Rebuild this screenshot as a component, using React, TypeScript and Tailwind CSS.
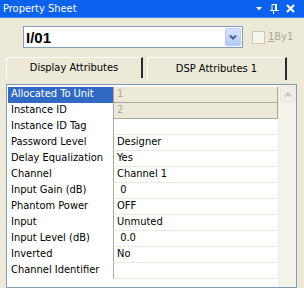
import React from "react";

const rows: { name: string; value: string; disabled?: boolean }[] = [
  { name: "Allocated To Unit", value: "1", disabled: true },
  { name: "Instance ID", value: "2", disabled: true },
  { name: "Instance ID Tag", value: "" },
  { name: "Password Level", value: "Designer" },
  { name: "Delay Equalization", value: "Yes" },
  { name: "Channel", value: "Channel 1" },
  { name: "Input Gain (dB)", value: "\u00a00" },
  { name: "Phantom Power", value: "OFF" },
  { name: "Input", value: "Unmuted" },
  { name: "Input Level (dB)", value: "\u00a00.0" },
  { name: "Inverted", value: "No" },
  { name: "Channel Identifier", value: "" },
];

const App: React.FC = () => {
  return (
    <div className="w-[304px] h-[288px] overflow-hidden bg-[#ECE9D8] flex flex-col font-['DejaVu_Sans_Condensed','Liberation_Sans',sans-serif] text-[11px] text-black">
      {/* Title bar */}
      <div className="h-[18px] bg-[#0a62ee] border-b border-[#3d86f5] flex items-center justify-between pl-[3px] pr-[9px] shrink-0">
        <span className="text-white text-[11px] leading-none">Property Sheet</span>
        <div className="flex items-center gap-[7px]">
          <svg width="6" height="4" viewBox="0 0 6 4">
            <path d="M0 0 H6 L3 3.5 Z" fill="white" />
          </svg>
          <svg width="10" height="10" viewBox="0 0 10 10">
            <path d="M3 0.5 H6.5 V6 M3 0.5 V6" stroke="white" strokeWidth="1" fill="none" />
            <rect x="6" y="0" width="2" height="6.5" fill="white" />
            <rect x="1" y="6" width="9" height="1" fill="white" />
            <rect x="4" y="7" width="1" height="3" fill="white" />
          </svg>
          <svg width="9" height="9" viewBox="0 0 9 9">
            <path d="M1 1 L8 8 M8 1 L1 8" stroke="white" strokeWidth="2" />
          </svg>
        </div>
      </div>

      {/* Combo + checkbox */}
      <div className="flex items-center pl-[23px] mt-[8px] shrink-0">
        <div className="w-[220px] h-[22px] border border-[#7F9DB9] bg-white flex items-center justify-between pl-[1px] pr-[1px]">
          <span className="font-['Liberation_Sans',Arial,sans-serif] font-bold text-[15px] leading-none pl-[1px]">I/01</span>
          <div className="w-[16px] h-[18px] rounded-[2px] bg-gradient-to-b from-[#d6e3fd] to-[#b3c9f7] border border-[#b8cdf8] flex items-center justify-center">
            <svg width="8" height="5" viewBox="0 0 8 5">
              <path d="M1 0.5 L4 3.5 L7 0.5" stroke="#4d6185" strokeWidth="2" fill="none" />
            </svg>
          </div>
        </div>
        <div className="ml-[9px] w-[13px] h-[13px] border border-[#cac8bb] bg-[#f6f5ef]" />
        <span className="ml-[3px] text-[#aca899]">
          <span className="underline">1</span>By1
        </span>
      </div>

      {/* Tabs */}
      <div className="flex items-end pl-[6px] mt-[9px] h-[23px] shrink-0">
        <div className="w-[137px] h-[21px] mb-[2px] rounded-tl-[3px] border-t border-l border-white border-r-2 border-r-[#2b2b2b] flex items-center justify-center">
          Display Attributes
        </div>
        <div className="ml-[4px] w-[140px] h-[23px] rounded-tl-[3px] border-t border-l border-white border-r-2 border-r-[#2b2b2b] flex items-center justify-center">
          DSP Attributes 1
        </div>
      </div>

      {/* Property grid */}
      <div className="ml-[6px] mt-[4px] w-[291px] flex-1 border border-[#7F9DB9] bg-white flex">
        <div className="w-[271px] pl-[1px] pt-[2px] flex flex-col">
          {rows.map((r, i) => (
            <div key={r.name} className="h-[16px] flex">
              <div
                className={
                  i === 0
                    ? "w-[105px] bg-[#316AC5] text-white pl-[3px] flex items-center border-b border-[#316AC5]"
                    : "w-[105px] pl-[3px] flex items-center border-b border-white"
                }
              >
                {r.name}
              </div>
              <div
                className={
                  r.disabled
                    ? "flex-1 bg-[#ECE9D8] text-[#aca899] pl-[3px] flex items-center border-l border-b border-[#aca899] border-r"
                    : "flex-1 pl-[3px] flex items-center border-l border-l-[#aca899] border-b border-b-[#ebe9dd]"
                }
              >
                {r.value}
              </div>
            </div>
          ))}
        </div>
        {/* Scrollbar */}
        <div className="w-[18px] bg-[#f4f2e9] border-l border-[#eeede5] pt-[1px] flex flex-col">
          <div className="mx-[1px] h-[16px] rounded-[2px] bg-[#f0efe8] border border-[#e8e6dc] flex items-center justify-center">
            <svg width="8" height="5" viewBox="0 0 8 5">
              <path d="M1 4.5 L4 1.5 L7 4.5" stroke="#c9c7ba" strokeWidth="2" fill="none" />
            </svg>
          </div>
        </div>
      </div>
    </div>
  );
};

export default App;
